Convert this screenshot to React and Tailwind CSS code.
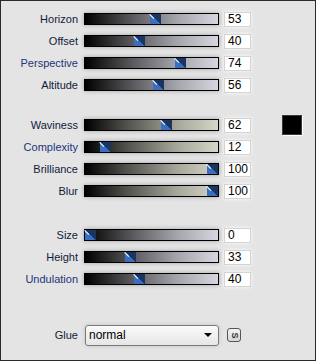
import React from "react";

const groups = [
  {
    tone: "lav",
    rows: [
      { label: "Horizon", value: 53, blue: false },
      { label: "Offset", value: 40, blue: false },
      { label: "Perspective", value: 74, blue: true },
      { label: "Altitude", value: 56, blue: false },
    ],
  },
  {
    tone: "beige",
    rows: [
      { label: "Waviness", value: 62, blue: false, swatch: true },
      { label: "Complexity", value: 12, blue: true },
      { label: "Brilliance", value: 100, blue: false },
      { label: "Blur", value: 100, blue: false },
    ],
  },
  {
    tone: "lav",
    rows: [
      { label: "Size", value: 0, blue: false },
      { label: "Height", value: 33, blue: false },
      { label: "Undulation", value: 40, blue: true },
    ],
  },
];

function Thumb({ value }) {
  const left = Math.round((value / 100) * (133 - 11));
  return (
    <div
      className="absolute top-0 bottom-0 w-[11px] bg-[linear-gradient(to_top_right,#3a6ec0_50%,#1a3560_50%)]"
      style={{ left }}
    >
      <div className="absolute left-[0px] top-[0px] w-[6px] h-[1px] bg-white origin-top-left rotate-45" />
    </div>
  );
}

function Row({ row, tone }) {
  const grad =
    tone === "beige"
      ? "bg-[linear-gradient(to_right,#000000,#5a5a55_35%,#a8a89c_70%,#d6d6c6)]"
      : "bg-[linear-gradient(to_right,#000000,#58585c_35%,#a6a6ae_70%,#d6d6e0)]";
  return (
    <div className="h-[22px] flex items-center">
      <div
        className={
          "w-[77px] text-right text-[11px] leading-none " +
          (row.blue ? "text-[#1c3478]" : "text-[#121a3c]")
        }
      >
        {row.label}
      </div>
      <div
        className={
          "ml-[6px] w-[135px] h-[12px] border border-black relative shadow-[0_0_4px_rgba(0,0,0,0.3)] " +
          grad
        }
      >
        <Thumb value={row.value} />
      </div>
      <div className="ml-[5px] w-[27px] h-[15px] bg-white border border-[#d4d4d4] shadow-[0_0_4px_rgba(255,255,255,0.9)] flex items-center pl-[3px] text-[12px] leading-none text-black">
        {row.value}
      </div>
      {row.swatch && (
        <div className="ml-[31px] w-[20px] h-[20px] bg-black border border-[#3a3a3a] shadow-[1px_1px_0_#ffffff]" />
      )}
    </div>
  );
}

export default function App() {
  return (
    <div className="w-[316px] h-[361px] bg-[#e4e4e4] border border-[#2a2a2a] font-['Liberation_Sans',Arial,sans-serif] pt-[7px]">
      <div className="flex flex-col">
        {groups[0].rows.map((r) => (
          <Row key={r.label} row={r} tone={groups[0].tone} />
        ))}
      </div>
      <div className="flex flex-col mt-[18px]">
        {groups[1].rows.map((r) => (
          <Row key={r.label} row={r} tone={groups[1].tone} />
        ))}
      </div>
      <div className="flex flex-col mt-[22px]">
        {groups[2].rows.map((r) => (
          <Row key={r.label} row={r} tone={groups[2].tone} />
        ))}
      </div>
      <div className="mt-[34px] h-[22px] flex items-center">
        <div className="w-[77px] text-right text-[11px] leading-none text-[#121a3c]">Glue</div>
        <div className="ml-[7px] w-[134px] h-[21px] rounded-[3px] border border-[#7a7a7a] bg-[linear-gradient(to_bottom,#fafafa,#e6e6e6)] flex items-center justify-between pl-[3px] pr-[6px] shadow-[0_0_4px_rgba(0,0,0,0.15)]">
          <span className="text-[12px] leading-none text-black">normal</span>
          <span className="w-0 h-0 border-l-[4px] border-r-[4px] border-t-[4px] border-l-transparent border-r-transparent border-t-black" />
        </div>
        <div className="ml-[8px] w-[14px] h-[14px] rounded-[3px] border border-[#555] bg-[linear-gradient(to_bottom,#f4f4f4,#d8d8d8)] flex items-center justify-center">
          <span className="text-[9px] font-bold leading-none text-[#333] rotate-90">S</span>
        </div>
      </div>
    </div>
  );
}
